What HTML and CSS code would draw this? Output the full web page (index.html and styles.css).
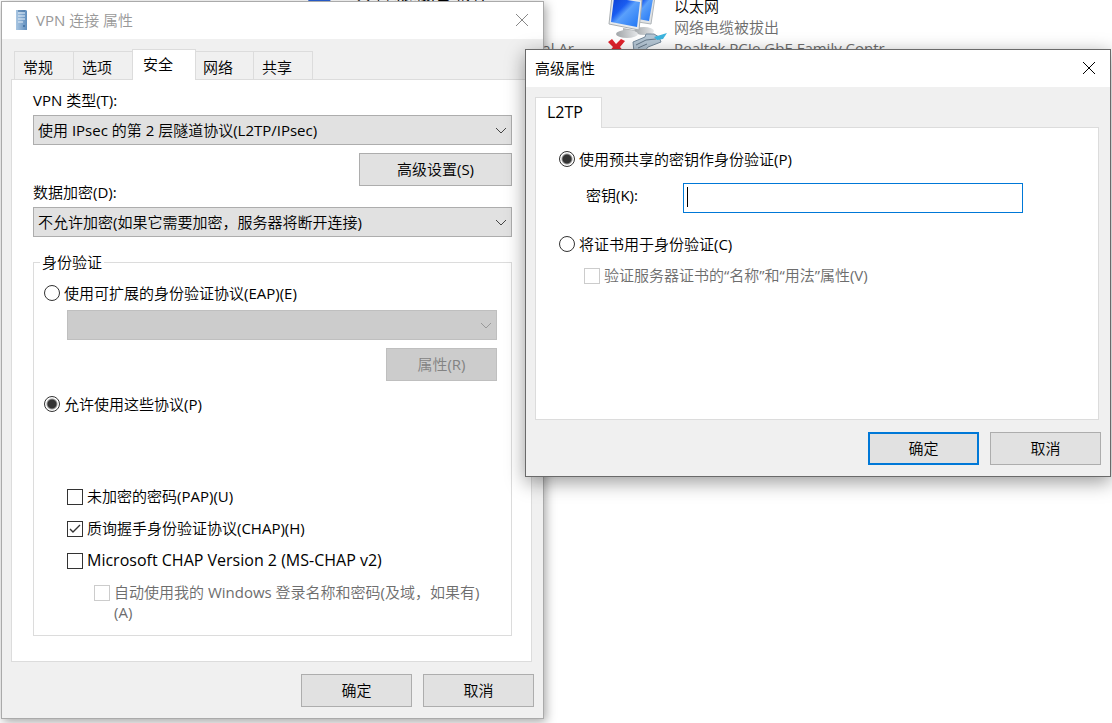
FILE: index.html
```html
<!DOCTYPE html>
<html lang="zh-CN">
<head>
    <meta charset="UTF-8">
    <meta name="viewport" content="width=device-width, initial-scale=1.0">
    <title>VPN 连接 属性</title>
    <link rel="stylesheet" href="styles.css">
</head>
<body>
    <!-- Ventana de conexiones de red, detrás de los diálogos -->
    <div class="connection shared">
        <svg width="40" height="19" viewBox="0 0 40 19" aria-hidden="true">
            <path d="M10 4 L32 6 L30 19 L8 19 Z" fill="#2a62d8"/>
        </svg>
        <p>共享的连接(已断开)</p>
    </div>
    <div class="connection adapter">
        <p>Intel(R) Dual Ar</p>
    </div>
    <div class="connection ethernet">
        <svg class="connection-icon" width="60" height="52" viewBox="0 0 60 52" aria-hidden="true">
            <defs>
                <linearGradient id="screen" x1="0" y1="0" x2="1" y2="1">
                    <stop offset="0" stop-color="#0d3fd2"/>
                    <stop offset="0.35" stop-color="#1a5cf0"/>
                    <stop offset="0.5" stop-color="#5aa0fb"/>
                    <stop offset="1" stop-color="#1f74f4"/>
                </linearGradient>
                <linearGradient id="stand" x1="0" y1="0" x2="1" y2="0">
                    <stop offset="0" stop-color="#a2a6a9"/>
                    <stop offset="1" stop-color="#e6e8ea"/>
                </linearGradient>
            </defs>
            <ellipse cx="36" cy="31" rx="10" ry="4" fill="url(#stand)"/>
            <path d="M20 -6 L47 -3 L43 24 L30 22 Z" fill="#e0e3e5" stroke="#b0b5b9"/>
            <path d="M24 -4 L45 -1 L41 21 L30 19 Z" fill="url(#screen)"/>
            <path d="M15 28 L26 30 L25 36 L15 34 Z" fill="#b4b8bb"/>
            <ellipse cx="19" cy="34" rx="11" ry="4" fill="url(#stand)"/>
            <path d="M4 -4 L34 0 L31 30 L1 24 Z" fill="#e8eaec" stroke="#a9aeb2"/>
            <path d="M6 -2 L32 2 L29 27 L3 22 Z" fill="url(#screen)"/>
            <path d="M25 42 L37 37 L38 34 L46 34 L51 37 L53 42 L40 47 L36 52 L26 52 Z" fill="#b5c6d4" stroke="#74899b"/>
            <path d="M28 45 L38 40 L48 39 M30 48 L39 44" fill="none" stroke="#66798a"/>
            <path d="M46 37 L59 33 L55 39 L49 40 Z" fill="#3cb4de"/>
            <path d="M0 42 L4 39 L8 44 L13 39 L17 41 L12 47 L17 53 L13 56 L8 51 L4 56 L0 53 L5 47 Z" fill="#e2222c"/>
        </svg>
        <div>
            <p class="connection-name">以太网</p>
            <p>网络电缆被拔出</p>
            <p>Realtek PCIe GbE Family Contr...</p>
        </div>
    </div>

    <main class="window properties">
        <header class="titlebar">
            <svg class="title-icon" width="14" height="22" viewBox="0 0 14 22" aria-hidden="true">
                <defs>
                    <linearGradient id="tower" x1="0" y1="0" x2="1" y2="0">
                        <stop offset="0" stop-color="#a9c6e2"/>
                        <stop offset="1" stop-color="#5f8dbd"/>
                    </linearGradient>
                </defs>
                <path d="M2 1 H12 L13 2 V21 H2 Z" fill="url(#tower)"/>
                <path d="M4 4 H11 M4 7 H11 M4 10 H11 M4 13 H9" stroke="#e6f0f9" stroke-width="1"/>
                <path d="M4 2 H11" stroke="#3f6c9c" stroke-width="1"/>
                <path d="M9 16 H11 V18 H9 Z" fill="#4a78a8"/>
            </svg>
            <h1>VPN 连接 属性</h1>
            <button class="close" type="button" aria-label="关闭">
                <svg width="14" height="14" viewBox="0 0 14 14"><path d="M1 1 L13 13 M13 1 L1 13"/></svg>
            </button>
        </header>
        <nav class="tabs">
            <button class="tab" type="button">常规</button>
            <button class="tab" type="button">选项</button>
            <button class="tab active" type="button">安全</button>
            <button class="tab" type="button">网络</button>
            <button class="tab" type="button">共享</button>
        </nav>
        <section class="pane">
            <label class="field-label" for="vpn-type">VPN 类型(T):</label>
            <select id="vpn-type" class="select">
                <option>使用 IPsec 的第 2 层隧道协议(L2TP/IPsec)</option>
            </select>
            <button class="button advanced" type="button">高级设置(S)</button>
            <label class="field-label" for="encryption">数据加密(D):</label>
            <select id="encryption" class="select">
                <option>不允许加密(如果它需要加密，服务器将断开连接)</option>
            </select>
            <fieldset class="group">
                <legend>身份验证</legend>
                <label class="option"><input type="radio" name="auth">使用可扩展的身份验证协议(EAP)(E)</label>
                <div class="eap">
                    <select class="select" aria-label="EAP" disabled></select>
                    <button class="button" type="button" disabled>属性(R)</button>
                </div>
                <label class="option"><input type="radio" name="auth" checked>允许使用这些协议(P)</label>
                <div class="protocols">
                    <label class="option"><input type="checkbox">未加密的密码(PAP)(U)</label>
                    <label class="option"><input type="checkbox" checked>质询握手身份验证协议(CHAP)(H)</label>
                    <label class="option latin"><input type="checkbox">Microsoft CHAP Version 2 (MS-CHAP v2)</label>
                    <label class="option nested disabled"><input type="checkbox" disabled><span>自动使用我的 Windows 登录名称和密码(及域，如果有)<br>(A)</span></label>
                </div>
            </fieldset>
        </section>
        <footer class="actions">
            <button class="button" type="button">确定</button>
            <button class="button" type="button">取消</button>
        </footer>
    </main>

    <section class="window dialog" role="dialog" aria-label="高级属性">
        <header class="titlebar">
            <h2>高级属性</h2>
            <button class="close" type="button" aria-label="关闭">
                <svg width="14" height="14" viewBox="0 0 14 14"><path d="M1 1 L13 13 M13 1 L1 13"/></svg>
            </button>
        </header>
        <nav class="tabs">
            <button class="tab active latin" type="button">L2TP</button>
        </nav>
        <section class="pane">
            <label class="option"><input type="radio" name="l2tp" checked>使用预共享的密钥作身份验证(P)</label>
            <div class="key-row">
                <label for="key">密钥(K):</label>
                <input type="text" id="key" class="key-input">
            </div>
            <label class="option"><input type="radio" name="l2tp">将证书用于身份验证(C)</label>
            <label class="option nested disabled"><input type="checkbox" disabled>验证服务器证书的“名称”和“用法”属性(V)</label>
        </section>
        <footer class="actions">
            <button class="button primary" type="button">确定</button>
            <button class="button" type="button">取消</button>
        </footer>
    </section>
</body>
</html>
```
FILE: styles.css
```css
* {
    box-sizing: border-box;
}
body, button, select, input {
    font-family: "Open Sans", "Noto Sans CJK SC DemiLight", "Noto Sans CJK SC", sans-serif;
    font-size: 15px;
    line-height: 20px;
}
body {
    margin: 0;
    min-height: 100vh;
    background: #fff;
    color: #000;
    overflow: hidden;
}
h1, h2, p {
    margin: 0;
    font-size: 15px;
    font-weight: normal;
}

/* Fondo */
.connection {
    position: absolute;
    color: #6d6d6d;
    line-height: 21px;
    white-space: nowrap;
}
.ethernet {
    display: flex;
    gap: 6px;
    left: 608px;
    top: -4px;
}
.connection-icon {
    margin-top: 4px;
}
.connection-name {
    color: #000;
}
.shared {
    display: flex;
    gap: 16px;
    left: 300px;
    top: -16px;
    color: #000;
}
.adapter {
    right: calc(50% - 18px);
    top: 38px;
}

/* Ventanas */
.window {
    position: absolute;
    background: #f0f0f0;
    border: 1px solid #aaa;
    box-shadow: 2px 3px 10px rgba(0, 0, 0, 0.35);
}
.properties {
    left: 1px;
    right: calc(50% + 12px);
    top: 1px;
}
.dialog {
    left: calc(50% - 31px);
    right: 1px;
    top: 49px;
    border-color: #6a6a6a;
    box-shadow: 0 5px 18px rgba(0, 0, 0, 0.4);
}
.titlebar {
    display: flex;
    align-items: center;
    height: 37px;
    padding: 0 14px 2px 9px;
    background: #fff;
}
.properties .titlebar {
    padding-left: 12px;
    color: #999;
}
.title-icon {
    margin-right: 8px;
}
.close {
    display: flex;
    margin-left: auto;
    padding: 0;
    border: none;
    background: none;
}
.close svg {
    fill: none;
    stroke: #000;
}
.properties .close svg {
    stroke: #888;
}

/* Pestañas */
.tabs {
    display: flex;
    align-items: flex-end;
    padding: 10px 12px 0;
}
.dialog .tabs {
    padding-left: 9px;
}
.tab {
    height: 28px;
    padding: 2px 20px 0 8px;
    border: 1px solid #dcdcdc;
    border-right: none;
    border-bottom: none;
    background: #f0f0f0;
    color: #000;
}
.tab:last-child {
    border-right: 1px solid #dcdcdc;
}
.tab.active {
    position: relative;
    z-index: 1;
    height: 31px;
    margin-bottom: -1px;
    padding: 0 22px 2px 10px;
    border-right: 1px solid #dcdcdc;
    background: #fff;
}
.tab.active + .tab {
    padding-left: 7px;
    border-left: none;
}
.dialog .tab.active {
    padding: 0 18px 2px 11px;
}
.pane {
    margin: 0 11px 0 9px;
    padding: 12px 19px 25px 21px;
    border: 1px solid #dcdcdc;
    background: #fff;
}
.actions {
    display: flex;
    justify-content: flex-end;
    gap: 11px;
    padding: 12px 9px 11px;
}

/* Controles */
.latin {
    font-size: 16px;
}
.button {
    min-width: 111px;
    height: 33px;
    padding: 0 6px 2px;
    border: 1px solid #adadad;
    background: #e1e1e1;
    color: #000;
}
.button.primary {
    border: 2px solid #0078d7;
}
.button:disabled {
    border-color: #bfbfbf;
    background: #ccc;
    color: #838383;
}
.advanced {
    display: block;
    min-width: 153px;
    margin: 8px 0 -2px auto;
}
.field-label {
    display: block;
    margin-bottom: 7px;
    line-height: 16px;
}
.select {
    appearance: none;
    display: block;
    width: 100%;
    height: 30px;
    padding: 0 28px 0 4px;
    border: 1px solid #adadad;
    border-radius: 0;
    background: #e1e1e1 url("data:image/svg+xml,%3Csvg xmlns='http://www.w3.org/2000/svg' width='12' height='7'%3E%3Cpath d='M1 1 L6 6 L11 1' fill='none' stroke='%23444'/%3E%3C/svg%3E") no-repeat right 4px center;
    color: #000;
}
.select:disabled {
    border-color: #bfbfbf;
    background-color: #ccc;
    background-image: url("data:image/svg+xml,%3Csvg xmlns='http://www.w3.org/2000/svg' width='12' height='7'%3E%3Cpath d='M1 1 L6 6 L11 1' fill='none' stroke='%23999'/%3E%3C/svg%3E");
    opacity: 1;
}
.group {
    margin: 15px 0 0;
    padding: 11px 14px 13px 10px;
    border: 1px solid #dcdcdc;
}
.group legend {
    margin-left: -4px;
    padding: 0 2px;
}
.option {
    display: flex;
    gap: 4px;
}
.option input {
    appearance: none;
    flex: none;
    width: 16px;
    height: 16px;
    margin: 2px 0;
    border: 1px solid #333;
    background: #fff;
}
.option input[type="radio"] {
    border-radius: 50%;
}
.option input[type="radio"]:checked {
    background: radial-gradient(circle, #333 4px, #fff 6px);
}
.option input[type="checkbox"] {
    margin: 3px 0 1px;
}
.option input[type="checkbox"]:checked {
    background: url("data:image/svg+xml,%3Csvg xmlns='http://www.w3.org/2000/svg' width='14' height='14'%3E%3Cpath d='M2 7 L5 10 L12 3' fill='none' stroke='%23333' stroke-width='1.4'/%3E%3C/svg%3E") no-repeat center;
}
.option input:disabled {
    border-color: #ccc;
}
.disabled {
    color: #6d6d6d;
}
.eap {
    display: flex;
    flex-direction: column;
    align-items: flex-end;
    gap: 8px;
    margin: 7px 0 13px;
    padding-left: 23px;
}
.protocols {
    display: flex;
    flex-direction: column;
    gap: 12px;
    margin-top: 72px;
    padding-left: 23px;
}
.nested {
    padding-left: 27px;
}

/* Diálogo L2TP */
.dialog .pane {
    min-height: 293px;
    padding: 21px 23px;
}
.key-row {
    display: flex;
    align-items: flex-start;
    margin: 14px 52px 21px 27px;
}
.key-row label {
    width: 97px;
    padding-top: 2px;
}
.key-input {
    flex: 1;
    height: 30px;
    padding: 0 4px;
    border: 1px solid #0078d7;
    border-radius: 0;
    outline: none;
    background: linear-gradient(#000, #000) no-repeat 3px 3px / 1px 20px;
}
.key-input:focus {
    background: #fff;
}
.dialog .nested {
    margin-top: 11px;
    padding-left: 25px;
}
```
